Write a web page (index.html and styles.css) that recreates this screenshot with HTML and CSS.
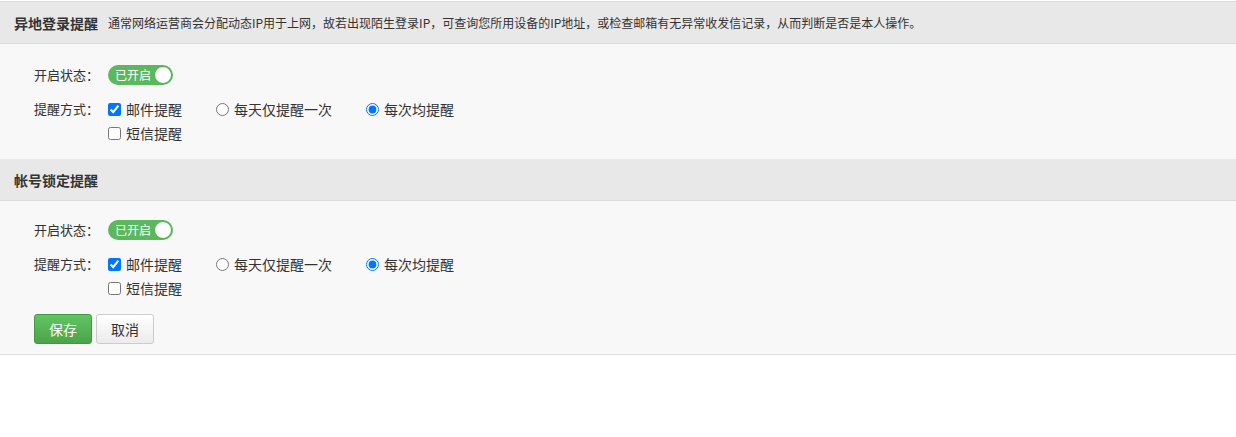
FILE: index.html
```html
<!DOCTYPE html>
<html lang="zh-CN">
<head>
<meta charset="utf-8">
<title>提醒设置</title>
<link rel="stylesheet" href="styles.css">
</head>
<body>
<div class="panel">
  <div class="sec-head first">
    <span class="sec-title">异地登录提醒</span>
    <span class="sec-desc">通常网络运营商会分配动态IP用于上网，故若出现陌生登录IP，可查询您所用设备的IP地址，或检查邮箱有无异常收发信记录，从而判断是否是本人操作。</span>
  </div>
  <div class="sec-body">
    <div class="row">
      <span class="label">开启状态：</span>
      <span class="toggle"><span class="toggle-text">已开启</span><span class="knob"></span></span>
    </div>
    <div class="row opts-row">
      <span class="label">提醒方式：</span>
      <div class="opts">
        <div class="opt-line">
          <label class="opt"><input type="checkbox" checked><span>邮件提醒</span></label>
          <label class="opt"><input type="radio" name="r1"><span>每天仅提醒一次</span></label>
          <label class="opt"><input type="radio" name="r1" checked><span>每次均提醒</span></label>
        </div>
        <div class="opt-line">
          <label class="opt"><input type="checkbox"><span>短信提醒</span></label>
        </div>
      </div>
    </div>
  </div>

  <div class="sec-head">
    <span class="sec-title">帐号锁定提醒</span>
  </div>
  <div class="sec-body last">
    <div class="row">
      <span class="label">开启状态：</span>
      <span class="toggle"><span class="toggle-text">已开启</span><span class="knob"></span></span>
    </div>
    <div class="row opts-row">
      <span class="label">提醒方式：</span>
      <div class="opts">
        <div class="opt-line">
          <label class="opt"><input type="checkbox" checked><span>邮件提醒</span></label>
          <label class="opt"><input type="radio" name="r2"><span>每天仅提醒一次</span></label>
          <label class="opt"><input type="radio" name="r2" checked><span>每次均提醒</span></label>
        </div>
        <div class="opt-line">
          <label class="opt"><input type="checkbox"><span>短信提醒</span></label>
        </div>
      </div>
    </div>
    <div class="actions">
      <button class="btn btn-primary">保存</button>
      <button class="btn btn-default">取消</button>
    </div>
  </div>
</div>
</body>
</html>
```

FILE: styles.css
```css
html, body {
  margin: 0;
  padding: 0;
  background: #ffffff;
}
body {
  font-family: "Noto Sans CJK SC", "Liberation Sans", sans-serif;
  color: #333333;
  font-size: 13px;
}
.panel {
  margin-top: 1px;
  border-top: 1px solid #dcdcdc;
}
.sec-head {
  height: 41px;
  background: #e8e8e8;
  border-bottom: 1px solid #dcdcdc;
  display: flex;
  align-items: center;
  padding-left: 14px;
}
.sec-title {
  font-size: 14px;
  font-weight: bold;
  color: #333333;
  margin-right: 10px;
}
.sec-desc {
  font-size: 12px;
  color: #333333;
}
.sec-body {
  background: #f8f8f8;
  padding: 21px 0 14px 34px;
}
.sec-body.last {
  padding-top: 19px;
  padding-bottom: 10px;
  border-bottom: 1px solid #dcdcdc;
}
.row {
  display: flex;
  align-items: center;
}
.opts-row {
  align-items: flex-start;
  margin-top: 12px;
}
.label {
  width: 74px;
  line-height: 24px;
  font-size: 13px;
  color: #333333;
}
.row:first-child .label {
  line-height: 20px;
}
.toggle {
  display: flex;
  align-items: center;
  justify-content: space-between;
  width: 65px;
  height: 20px;
  box-sizing: border-box;
  background: #5cb85c;
  border-radius: 10px;
  padding-left: 7px;
  padding-right: 1px;
}
.toggle-text {
  color: #ffffff;
  font-size: 12px;
  line-height: 20px;
}
.knob {
  width: 18px;
  height: 18px;
  box-sizing: border-box;
  border-radius: 50%;
  background: #ffffff;
  border: 1px solid #4cae4c;
}
.opts {
  display: flex;
  flex-direction: column;
}
.opt-line {
  display: flex;
  height: 24px;
  align-items: center;
}
.opt {
  display: flex;
  align-items: center;
  margin-right: 34px;
  font-size: 14px;
  color: #333333;
}
.opt input {
  margin: 0 5px 0 0;
  width: 13px;
  height: 13px;
}
.actions {
  display: flex;
  gap: 4px;
  margin-top: 14px;
}
.btn {
  height: 30px;
  padding: 0;
  border-radius: 3px;
  font-family: "Noto Sans CJK SC", "Liberation Sans", sans-serif;
  font-size: 14px;
  cursor: pointer;
}
.btn-primary {
  width: 58px;
  color: #ffffff;
  background: linear-gradient(#62c462, #4aa54a);
  border: 1px solid #3f9a3f;
}
.btn-default {
  width: 58px;
  color: #333333;
  background: linear-gradient(#ffffff, #ebebeb);
  border: 1px solid #cccccc;
}
```
